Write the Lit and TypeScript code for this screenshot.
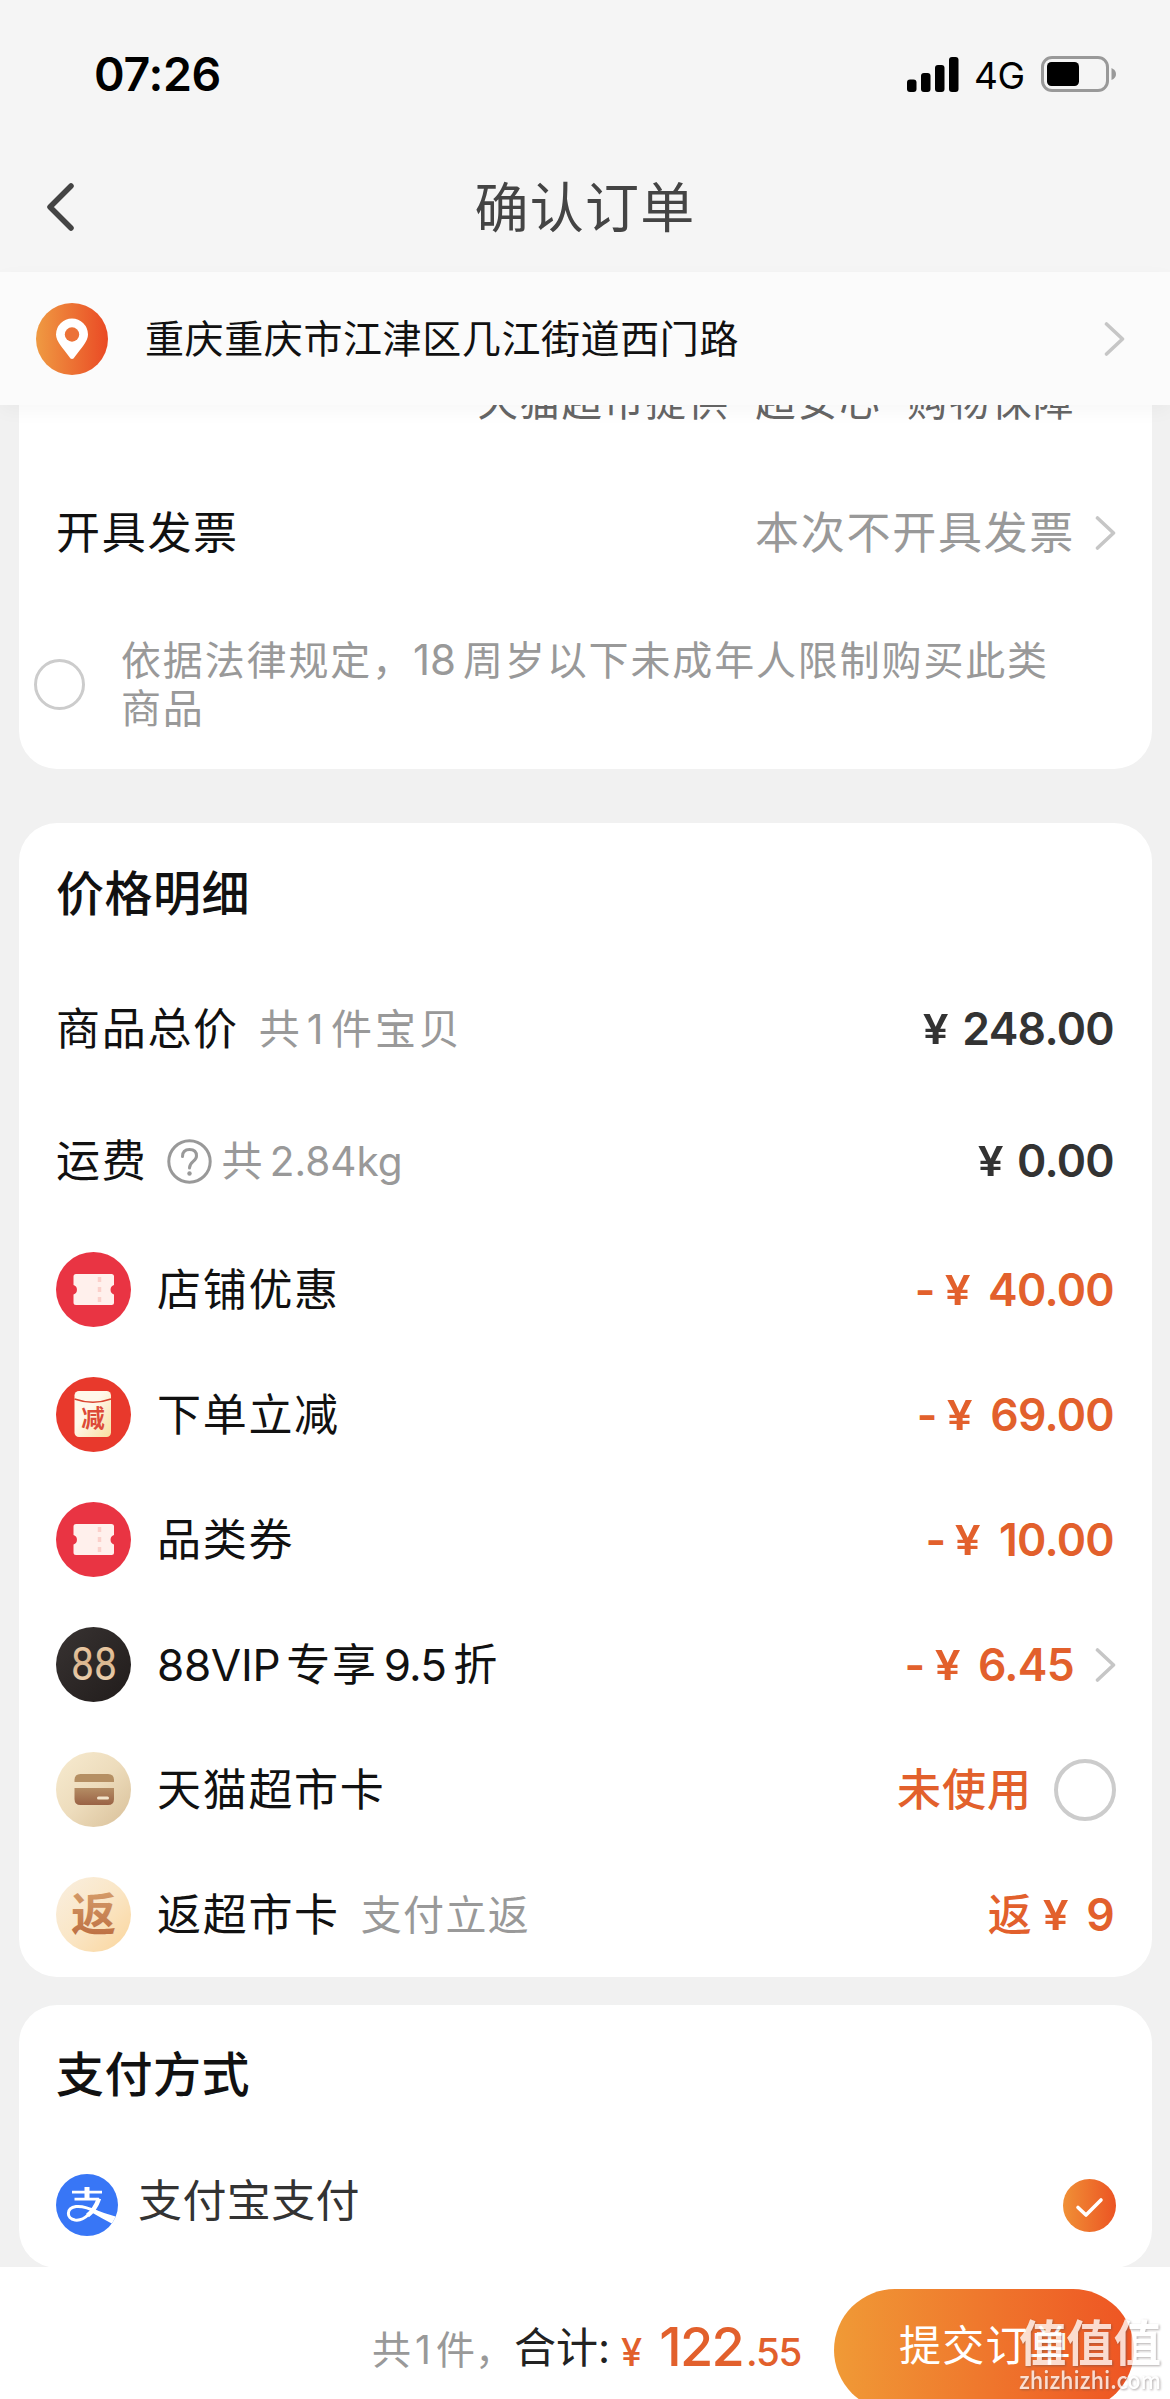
import { LitElement, html, css, svg, nothing } from "lit";
import { customElement, property } from "lit/decorators.js";

type Row = { icon: string; label: unknown; note?: string; amount: unknown; tail?: string };

const rows: Row[] = [
  { icon: "ticket", label: "店铺优惠", amount: html`<i class="m">-</i><i class="y">¥</i>40.00` },
  { icon: "bag", label: "下单立减", amount: html`<i class="m">-</i><i class="y">¥</i>69.00` },
  { icon: "ticket", label: "品类券", amount: html`<i class="m">-</i><i class="y">¥</i>10.00` },
  { icon: "vip", label: html`<i class="vip">88VIP</i>专享<i class="rate">9.5</i>折`, amount: html`<i class="m">-</i><i class="y">¥</i>6.45`, tail: "chevron" },
  { icon: "card", label: "天猫超市卡", amount: html`<i class="cn">未使用</i>`, tail: "radio" },
  { icon: "cashback", label: "返超市卡", note: "支付立返", amount: html`<i class="cn rebate">返</i><i class="y">¥</i>9` },
];

const chevron = html`<svg class="chevron" width="22" height="36" viewBox="0 0 22 36"><path d="M2.5 3 18.5 18 2.5 33" fill="none" stroke="#c6c6c6" stroke-width="3.6" stroke-linecap="round" stroke-linejoin="round"/></svg>`;

@customElement("order-icon")
export class OrderIcon extends LitElement {
  @property() name = "";

  static styles = css`
    :host { display: block; width: 75px; height: 75px; flex: none; }
    svg { display: block; }
    text { font-family: "Noto Sans CJK SC", sans-serif; }
    .thin { font-family: "Roboto", sans-serif; font-weight: 400; }
  `;

  private shape() {
    switch (this.name) {
      case "ticket":
        return svg`<circle cx="37.5" cy="37.5" r="37.5" fill="#e93443"/>
          <path d="M20 22h35.500q2.500 0 2.500 2.500v8.500a5 5 0 0 0 0 9.500v8q0 2.500-2.500 2.500H20q-2.500 0-2.500-2.500v-8a5 5 0 0 0 0-9.500v-8.500q0-2.500 2.500-2.500z" fill="#fff0ec"/>
          <path d="M43.500 25v5M43.500 35v5M43.500 45v5" stroke="#fbd0ca" stroke-width="3.500"/>`;
      case "bag":
        return svg`<defs><linearGradient id="b" x1="0" y1="0" x2="1" y2="1"><stop offset=".4" stop-color="#fff8ea"/><stop offset="1" stop-color="#f8df9f"/></linearGradient></defs>
          <circle cx="37.500" cy="37.500" r="37.500" fill="#e8392c"/>
          <rect x="18.500" y="14" width="36.500" height="46" rx="4.500" fill="url(#b)"/>
          <path d="M18.500 22q18.500 6.500 36.500 0" fill="none" stroke="#d9432f" stroke-width="1.600"/>
          <text x="37" y="50" text-anchor="middle" font-size="23.500" font-weight="700" fill="#dd4a38">减</text>`;
      case "vip":
        return svg`<defs><linearGradient id="v" x1="0" y1="0" x2="0" y2="1"><stop offset="0" stop-color="#f8d9b4"/><stop offset=".45" stop-color="#d9b48c"/><stop offset="1" stop-color="#f6e0c2"/></linearGradient>
          <linearGradient id="k" x1="0" y1="0" x2="1" y2="1"><stop offset="0" stop-color="#383332"/><stop offset="1" stop-color="#211c1b"/></linearGradient></defs>
          <circle cx="37.500" cy="37.500" r="37.500" fill="url(#k)"/>
          <text class="thin" x="38" y="53" text-anchor="middle" font-size="47" textLength="46" lengthAdjust="spacingAndGlyphs" fill="url(#v)">88</text>`;
      case "card":
        return svg`<defs><linearGradient id="c" x1="0" y1="0" x2="1" y2="1"><stop offset="0" stop-color="#f7ebd0"/><stop offset=".5" stop-color="#eddcbc"/><stop offset="1" stop-color="#d8bf98"/></linearGradient>
          <linearGradient id="d" x1="0" y1="0" x2="0" y2="1"><stop offset="0" stop-color="#b48d64"/><stop offset="1" stop-color="#9a6245"/></linearGradient></defs>
          <circle cx="37.500" cy="37.500" r="37.500" fill="url(#c)"/>
          <path d="M18.500 30v-2q0-6 6-6h27.500q6 0 6 6v2z" fill="#b58f63"/>
          <path d="M18.500 36h39.500v11q0 6-6 6H24.500q-6 0-6-6z" fill="url(#d)"/>
          <path d="M42.500 46h9" stroke="#f3e4cb" stroke-width="3" stroke-linecap="round"/>`;
      default:
        return svg`<defs><linearGradient id="e" x1="0" y1="0" x2="1" y2="1"><stop offset="0" stop-color="#f9efe0"/><stop offset=".5" stop-color="#fae6c6"/><stop offset="1" stop-color="#fad59c"/></linearGradient>
          <linearGradient id="f" x1="0" y1="0" x2="0" y2="1"><stop offset="0" stop-color="#dba773"/><stop offset="1" stop-color="#b9683c"/></linearGradient></defs>
          <circle cx="37.500" cy="37.500" r="37.500" fill="url(#e)"/>
          <text x="37.500" y="54" text-anchor="middle" font-size="45" font-weight="700" fill="url(#f)">返</text>`;
    }
  }

  render() {
    return html`<svg width="75" height="75" viewBox="0 0 75 75">${this.shape()}</svg>`;
  }
}

@customElement("app-root")
export class AppRoot extends LitElement {
  static styles = css`
    :host {
      display: block;
      font-family: Inter, "Noto Sans CJK SC", sans-serif;
      color: #111;
    }
    * { box-sizing: border-box; }
    i { font-style: normal; }
    svg { display: block; flex: none; }
    .page { display: flex; flex-direction: column; height: 2399px; overflow: hidden; background: #f1f1f1; position: relative; }
    .status { flex: none; height: 148px; background: #f5f5f5; display: flex; align-items: center; justify-content: space-between; padding: 0 54px 0 94px; }
    .time { font-size: 46.5px; font-weight: 600; letter-spacing: -0.3px; color: #000; }
    .signals { display: flex; align-items: center; }
    .net { font-size: 37px; font-weight: 400; margin: 2px 14px 0 15px; color: #000; width: 53px; letter-spacing: -0.5px; }
    .nav { flex: none; height: 124px; background: #f5f5f5; display: grid; grid-template-columns: 1fr auto 1fr; align-items: center; padding: 0 46px; }
    .title { font-size: 54px; letter-spacing: 1.2px; color: #444; line-height: 60px; margin-top: -3px; }
    .back { margin-top: -6px; }
    .address { flex: none; height: 133px; background: #fbfbfb; display: flex; align-items: center; padding: 0 44px 0 36px; z-index: 1; box-shadow: 0 6px 18px rgba(0,0,0,.035); }
    .address span { font-size: 39px; letter-spacing: .6px; margin-left: 37px; flex: 1; padding-bottom: 5px; }
    .cards { flex: 1; min-height: 0; padding: 0 18px 0 19px; }
    .card { background: #fff; border-radius: 38px; padding: 0 36px 0 37px; overflow: hidden; }
    .line { display: flex; align-items: center; }
    .line > .grow { flex: 1; }
    .line .chevron { margin-right: -1px; }
    .first { height: 364px; border-radius: 0 0 38px 38px; }
    .service { display: flex; justify-content: flex-end; height: 60px; margin-right: 41px; font-size: 40.5px; line-height: 60px; letter-spacing: 1.5px; color: #666; margin-top: -33px; white-space: pre; }
    .label { font-size: 44px; letter-spacing: 1.7px; line-height: 60px; white-space: nowrap; }
    .muted { color: #999; }
    .invoice { height: 80px; margin-top: 61px; }
    .invoice .chevron { margin-left: 20px; }
    .law { display: flex; align-items: center; margin: 62px 0 0 -22px; }
    .law p { margin: 2px 0 0 36px; font-size: 40px; letter-spacing: 1.85px; line-height: 48px; color: #999; }
    .law .n { margin: 0 7px 0 -1px; letter-spacing: 0; font-size: 42px; line-height: 40px; }
    .circle { border: 3.5px solid #ccc; border-radius: 50%; flex: none; }
    .c51 { width: 51px; height: 51px; }
    .c62 { width: 62px; height: 62px; border-width: 4px; margin-left: 22px; }
    .detail { margin-top: 54px; height: 1154px; }
    h2 { margin: 0; font-size: 48px; letter-spacing: .5px; font-weight: 500; line-height: 60px; }
    .detail h2 { padding-top: 41px; }
    .goods { height: 132px; margin-top: 39px; }
    .goods + .goods { margin-top: 0; }
    .small { font-size: 41px; letter-spacing: 1.3px; color: #999; line-height: 60px; }
    .items { margin-left: 20px; letter-spacing: 2.8px; }
    .one { margin: 0 5px 0 4px; }
    .price { font-size: 44.5px; font-weight: 600; color: #333; letter-spacing: -.7px; display: flex; align-items: center; line-height: 60px; }
    .price:last-child { margin-right: 2px; }
    .y { font-size: 41px; margin-right: 16px; display: inline-block; transform: scaleX(1.12); }
    .row .y { margin-right: 20px; }
    .m { margin-right: 11px; }
    .orange { color: #e2602c; }
    .cn { font-weight: 500; font-size: 44px; letter-spacing: 1px; }
    .rebate { margin-right: 11px; }
    .row { height: 125px; }
    .row .label { margin-left: 26px; }
    .row .small { margin-left: 21px; }
    .row .chevron { margin-left: 21px; }
    .vip { letter-spacing: -.3px; margin-right: 6px; }
    .rate { margin: 0 7px 0 6px; letter-spacing: -.8px; }
    .help { margin: 0 9px 0 20px; }
    .weight { margin-left: 6px; letter-spacing: 0; font-size: 40.5px; }
    .pay { margin-top: 28px; height: 263px; }
    .pay h2 { padding-top: 40px; }
    .alipay { height: 62px; margin-top: 69px; }
    .alipay .label { margin-left: 20px; letter-spacing: .4px; color: #333; margin-top: -9px; }
    .footer { flex: none; height: 132px; background: #fff; display: flex; align-items: flex-start; justify-content: flex-end; padding-right: 36px; }
    .sum { display: flex; align-items: baseline; white-space: nowrap; line-height: 60px; margin-top: 50px; }
    .count { font-size: 39px; color: #999; transform: translateY(-2px); }
    .total { font-size: 42px; color: #222; margin-right: 11px; transform: translateY(-3px); }
    .fy { font-size: 38px; margin-right: 17px; font-weight: 500; }
    .big { font-size: 54px; letter-spacing: -1.7px; font-weight: 500; }
    .dec { font-size: 38.5px; letter-spacing: -1.3px; font-weight: 500; margin-left: 3px; }
    .submit { margin: 22px 0 0 33px; width: 300px; height: 122px; border: 0; border-radius: 61px; background: linear-gradient(90deg,#f09a36,#ee5423); color: #fff; font: 42px/110px Inter,"Noto Sans CJK SC",sans-serif; letter-spacing: 1.2px; padding: 0 0 9px 3px; }
    .mark { position: absolute; right: 7px; top: 2308px; width: 146px; }
    .mark svg { overflow: visible; filter: drop-shadow(1px 1.5px 1px rgba(90,80,80,.6)); opacity: .78; }
    .mark text { font-family: "Noto Sans CJK SC", sans-serif; }
  `;

  render() {
    return html`
      <div class="page">
        <div class="status">
          <span class="time">07:26</span>
          <div class="signals">
            <svg width="52" height="35" viewBox="0 0 52 35"><g fill="#000"><rect x="0" y="22.500" width="9.500" height="12.500" rx="3"/><rect x="14" y="16" width="9.500" height="19" rx="3"/><rect x="28" y="8" width="9.500" height="27" rx="3"/><rect x="42" y="0" width="9.500" height="35" rx="3"/></g></svg>
            <span class="net">4G</span>
            <svg width="75" height="36" viewBox="0 0 75 36"><rect x="1.500" y="1.500" width="65" height="33" rx="9.500" fill="none" stroke="#999" stroke-width="3"/><rect x="6" y="6" width="32" height="24" rx="4.500" fill="#000"/><path d="M70.500 12q4.500 2 4.500 6t-4.500 6z" fill="#999"/></svg>
          </div>
        </div>
        <div class="nav">
          <svg class="back" width="28" height="48" viewBox="0 0 28 48"><path d="M25 3 4 24 25 45" fill="none" stroke="#444" stroke-width="5.500" stroke-linecap="round" stroke-linejoin="round"/></svg>
          <span class="title">确认订单</span>
        </div>
        <div class="address">
          <svg width="72" height="72" viewBox="0 0 72 72"><defs><linearGradient id="p"><stop offset="0" stop-color="#ef9a42"/><stop offset="1" stop-color="#ea4a25"/></linearGradient></defs><circle cx="36" cy="36" r="36" fill="url(#p)"/><path d="M36 56Q34.500 56 33 53.500C27 45 20 38.500 20 31.500a16 16 0 0 1 32 0C52 38.500 45 45 39 53.500Q37.500 56 36 56z" fill="#fff"/><circle cx="36" cy="31.500" r="7.200" fill="#ec7237"/></svg>
          <span>重庆重庆市江津区几江街道西门路</span>
          ${chevron}
        </div>
        <div class="cards">
          <section class="card first">
            <div class="service">天猫超市提供  超安心  购物保障</div>
            <div class="line invoice">
              <span class="label grow">开具发票</span><span class="label muted">本次不开具发票</span>${chevron}
            </div>
            <div class="law"><i class="circle c51"></i><p>依据法律规定，<i class="n">18</i>周岁以下未成年人限制购买此类<br>商品</p></div>
          </section>
          <section class="card detail">
            <h2>价格明细</h2>
            <div class="line goods"><span class="label">商品总价</span><span class="small grow items">共<i class="one">1</i>件宝贝</span><span class="price"><i class="y">¥</i>248.00</span></div>
            <div class="line goods"><span class="label">运费</span>
              <svg class="help" width="45" height="45" viewBox="0 0 45 45"><g fill="none" stroke="#999" stroke-width="3"><circle cx="22.500" cy="22.500" r="20.700"/><path d="M15.500 17.500q0-7 7-7t7 6.500c0 5.500-7 5.500-7 12" stroke-linecap="round"/></g><circle cx="22.500" cy="34.500" r="2.200" fill="#999"/></svg>
              <span class="small grow">共<i class="weight">2.84kg</i></span><span class="price"><i class="y">¥</i>0.00</span></div>
            ${rows.map((r) => html`
              <div class="line row">
                <order-icon name=${r.icon}></order-icon>
                <span class="label">${r.label}</span>
                <span class="small grow">${r.note ?? nothing}</span>
                <span class="price orange">${r.amount}</span>
                ${r.tail === "chevron" ? chevron : r.tail === "radio" ? html`<i class="circle c62"></i>` : nothing}
              </div>`)}
          </section>
          <section class="card pay">
            <h2>支付方式</h2>
            <div class="line alipay">
              <svg width="62" height="62" viewBox="0 0 62 62"><defs><clipPath id="a"><circle cx="31" cy="31" r="31"/></clipPath></defs><g clip-path="url(#a)"><rect width="62" height="62" fill="#3876f6"/><path d="M16 18.200h30M18.500 25.200h24.500" fill="none" stroke="#fff" stroke-width="2.800"/><path d="M31 13v12.500" stroke="#fff" stroke-width="5"/><path d="M43 24.500C40 33 36 38 31.500 41.500" fill="none" stroke="#fff" stroke-width="4.500"/><path d="M32.500 40.500C27 46 22.500 46.500 19 46c-9-1.500-9-12 1-13.500 7-.7 13 1.500 21 5.500" fill="none" stroke="#fff" stroke-width="3"/><path d="M34 33.800 Q48 39.500 63 43.500L58.500 51Q46 44.500 34 37.500z" fill="#fff"/></g></svg>
              <span class="label grow">支付宝支付</span>
              <svg width="53" height="53" viewBox="0 0 53 53"><defs><linearGradient id="q"><stop offset="0" stop-color="#f09036"/><stop offset="1" stop-color="#ec5423"/></linearGradient></defs><circle cx="26.500" cy="26.500" r="26.500" fill="url(#q)"/><path d="M15 28.500 23 36 38 21" fill="none" stroke="#fff" stroke-width="3.600" stroke-linecap="round" stroke-linejoin="round"/></svg>
            </div>
          </section>
        </div>
        <div class="footer">
          <div class="sum"><span class="count">共<i class="one">1</i>件，</span><span class="total">合计:</span><span class="orange fy">¥</span><span class="orange big">122</span><span class="orange dec">.55</span></div>
          <button class="submit">提交订单</button>
        </div>
        <div class="mark"><svg width="146" height="90" viewBox="0 0 146 90"><text x="2" y="53" font-size="49" font-weight="700" textLength="142" lengthAdjust="spacingAndGlyphs" fill="#fff">值值值</text><text x="2" y="81" font-size="24" font-weight="500" textLength="142" lengthAdjust="spacingAndGlyphs" fill="#fff">zhizhizhi.com</text></svg></div>
      </div>`;
  }
}
